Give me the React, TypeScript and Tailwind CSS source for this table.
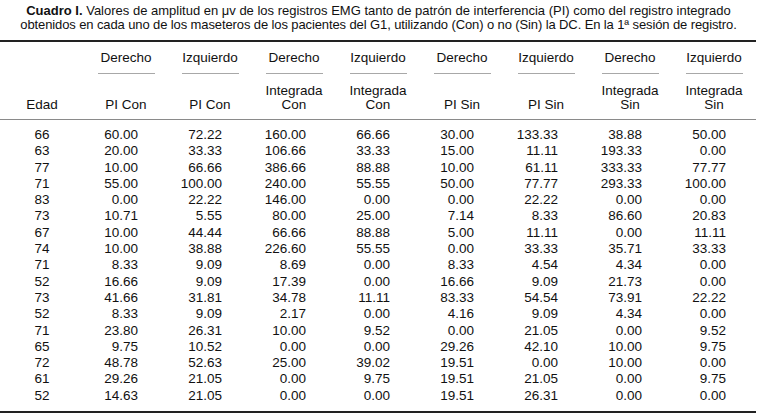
import React from "react";

const rows: string[][] = [
  ["66", "60.00", "72.22", "160.00", "66.66", "30.00", "133.33", "38.88", "50.00"],
  ["63", "20.00", "33.33", "106.66", "33.33", "15.00", "11.11", "193.33", "0.00"],
  ["77", "10.00", "66.66", "386.66", "88.88", "10.00", "61.11", "333.33", "77.77"],
  ["71", "55.00", "100.00", "240.00", "55.55", "50.00", "77.77", "293.33", "100.00"],
  ["83", "0.00", "22.22", "146.00", "0.00", "0.00", "22.22", "0.00", "0.00"],
  ["73", "10.71", "5.55", "80.00", "25.00", "7.14", "8.33", "86.60", "20.83"],
  ["67", "10.00", "44.44", "66.66", "88.88", "5.00", "11.11", "0.00", "11.11"],
  ["74", "10.00", "38.88", "226.60", "55.55", "0.00", "33.33", "35.71", "33.33"],
  ["71", "8.33", "9.09", "8.69", "0.00", "8.33", "4.54", "4.34", "0.00"],
  ["52", "16.66", "9.09", "17.39", "0.00", "16.66", "9.09", "21.73", "0.00"],
  ["73", "41.66", "31.81", "34.78", "11.11", "83.33", "54.54", "73.91", "22.22"],
  ["52", "8.33", "9.09", "2.17", "0.00", "4.16", "9.09", "4.34", "0.00"],
  ["71", "23.80", "26.31", "10.00", "9.52", "0.00", "21.05", "0.00", "9.52"],
  ["65", "9.75", "10.52", "0.00", "0.00", "29.26", "42.10", "10.00", "9.75"],
  ["72", "48.78", "52.63", "25.00", "39.02", "19.51", "0.00", "10.00", "0.00"],
  ["61", "29.26", "21.05", "0.00", "9.75", "19.51", "21.05", "0.00", "9.75"],
  ["52", "14.63", "21.05", "0.00", "0.00", "19.51", "26.31", "0.00", "0.00"],
];

const top = ["", "Derecho", "Izquierdo", "Derecho", "Izquierdo", "Derecho", "Izquierdo", "Derecho", "Izquierdo"];
const sub: string[][] = [
  ["Edad"],
  ["PI Con"],
  ["PI Con"],
  ["Integrada", "Con"],
  ["Integrada", "Con"],
  ["PI Sin"],
  ["PI Sin"],
  ["Integrada", "Sin"],
  ["Integrada", "Sin"],
];

export default function App() {
  return (
    <div
      className="w-[757px] h-[419px] bg-white text-[#111] overflow-hidden"
      style={{ fontFamily: '"Liberation Sans", Arial, sans-serif' }}
    >
      <div className="pt-[4px] text-center text-[13px] leading-[14px]">
        <div>
          <span className="font-bold">Cuadro I.</span> Valores de amplitud en μv de los registros EMG tanto de patrón de interferencia (PI) como del registro integrado
        </div>
        <div className="tracking-[-0.11px]">
          obtenidos en cada uno de los maseteros de los pacientes del G1, utilizando (Con) o no (Sin) la DC. En la 1ª sesión de registro.
        </div>
      </div>

      <div className="mt-[8px] w-[756px] border-t-2 border-[#222] text-[13.5px]">
        <div className="grid grid-cols-[repeat(9,84px)] pt-[8px] leading-[16px]">
          {top.map((t, i) => (
            <div key={i} className="flex flex-col items-center">
              <div className="h-[16px]">{t}</div>
              <div className={"mt-[7px] h-px w-[57px] " + (t ? "bg-[#a8a8a8]" : "bg-transparent")} />
            </div>
          ))}
        </div>
        <div className="grid grid-cols-[repeat(9,84px)] items-end pt-[10px] pb-[7px] leading-[14px] border-b border-[#8a8a8a]">
          {sub.map((lines, i) => (
            <div key={i} className="flex flex-col items-center">
              {lines.map((l, j) => (
                <div key={j}>{l}</div>
              ))}
            </div>
          ))}
        </div>
        <div className="pt-[7px] pb-[7px] leading-[16.3px] border-b-2 border-[#222]">
          {rows.map((r, ri) => (
            <div key={ri} className="grid grid-cols-[repeat(9,84px)]">
              {r.map((c, ci) => (
                <div key={ci} className={ci === 0 ? "text-center" : "text-right pr-[30px]"}>
                  {c}
                </div>
              ))}
            </div>
          ))}
        </div>
      </div>
    </div>
  );
}
